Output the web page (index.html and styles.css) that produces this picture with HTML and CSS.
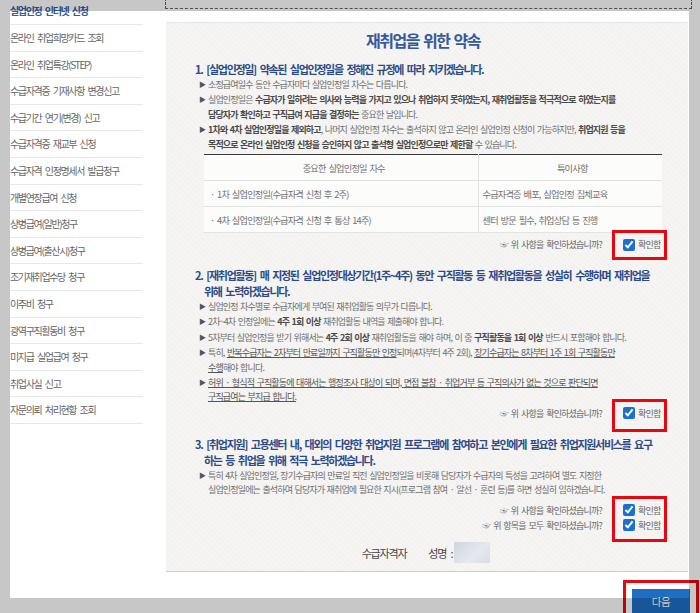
FILE: index.html
```html
<!DOCTYPE html>
<html>
<head>
	<meta charset="utf-8">
	<title>재취업을 위한 약속</title>

	<link rel="stylesheet" href="styles.css">
</head>
<body>

<div class="wrap">

	<div class="side">
		<ul>
			<li class="on"><a href="#">실업인정 인터넷 신청</a></li>
			<li><a href="#">온라인 취업희망카드 조회</a></li>
			<li><a href="#">온라인 취업특강(STEP)</a></li>
			<li><a href="#">수급자격증 기재사항 변경신고</a></li>
			<li><a href="#">수급기간 연기(변경) 신고</a></li>
			<li><a href="#">수급자격증 재교부 신청</a></li>
			<li><a href="#">수급자격 인정명세서 발급청구</a></li>
			<li><a href="#">개별연장급여 신청</a></li>
			<li><a href="#">상병급여(일반)청구</a></li>
			<li><a href="#">상병급여(출산시)청구</a></li>
			<li><a href="#">조기재취업수당 청구</a></li>
			<li><a href="#">이주비 청구</a></li>
			<li><a href="#">광역구직활동비 청구</a></li>
			<li><a href="#">미지급 실업급여 청구</a></li>
			<li><a href="#">취업사실 신고</a></li>
			<li><a href="#">자문의뢰 처리현황 조회</a></li>
		</ul>
	</div>

	<div class="main">
		<div class="topbox"></div>

		<div class="promise">
			<h2 class="title">재취업을 위한 약속</h2>

			<div class="item">
				<h3 class="head">1. [실업인정일] 약속된 실업인정일을 정해진 규정에 따라 지키겠습니다.</h3>
				<ul class="notes">
					<li>소정급여일수 동안 수급자마다 실업인정일 차수는 다릅니다.</li>
					<li>실업인정일은 <b>수급자가 일하려는 의사와 능력을 가지고 있으나 취업하지 못하였는지, 재취업활동을 적극적으로 하였는지를<br>담당자가 확인하고 구직급여 지급을 결정하는</b> 중요한 날입니다.</li>
					<li><b>1차와 4차 실업인정일을 제외하고</b>, 나머지 실업인정 차수는 출석하지 않고 온라인 실업인정 신청이 가능하지만, <b>취업지원 등을<br>목적으로 온라인 실업인정 신청을 승인하지 않고 출석형 실업인정으로만 제한할</b> 수 있습니다.</li>
				</ul>

				<table class="days">
					<tr>
						<th class="c1">중요한 실업인정일 차수</th>
						<th class="c2">특이사항</th>
					</tr>
					<tr>
						<td class="c1">· 1차 실업인정일(수급자격 신청 후 2주)</td>
						<td class="c2">수급자격증 배포, 실업인정 집체교육</td>
					</tr>
					<tr>
						<td class="c1">· 4차 실업인정일(수급자격 신청 후 통상 14주)</td>
						<td class="c2">센터 방문 필수, 취업상담 등 진행</td>
					</tr>
				</table>

				<div class="confirm c1st">
					<div class="q"><p>☞ 위 사항을 확인하셨습니까?</p></div>
					<div class="mark">
						<label><input type="checkbox" checked> 확인함</label>
					</div>
				</div>
			</div>

			<div class="item i2">
				<h3 class="head">2. [재취업활동] 매 지정된 실업인정대상기간(1주~4주) 동안 구직활동 등 재취업활동을 성실히 수행하며 재취업을<br>위해 노력하겠습니다.</h3>
				<ul class="notes">
					<li>실업인정 차수별로 수급자에게 부여된 재취업활동 의무가 다릅니다.</li>
					<li>2차~4차 인정일에는 <b>4주 1회 이상</b> 재취업활동 내역을 제출해야 합니다.</li>
					<li>5차부터 실업인정을 받기 위해서는 <b>4주 2회 이상</b> 재취업활동을 해야 하며, 이 중 <b>구직활동을 1회 이상</b> 반드시 포함해야 합니다.</li>
					<li>특히, <u>반복수급자는 2차부터 만료일까지 구직활동만 인정</u>되며(4차부터 4주 2회), <u>장기수급자는 8차부터 1주 1회 구직활동만<br>수행</u>해야 합니다.</li>
					<li><u>허위 · 형식적 구직활동에 대해서는 행정조사 대상이 되며, 면접 불참 · 취업거부 등 구직의사가 없는 것으로 판단되면<br>구직급여는 부지급 합니다.</u></li>
				</ul>

				<div class="confirm c2nd">
					<div class="q"><p>☞ 위 사항을 확인하셨습니까?</p></div>
					<div class="mark">
						<label><input type="checkbox" checked> 확인함</label>
					</div>
				</div>
			</div>

			<div class="item i3">
				<h3 class="head">3. [취업지원] 고용센터 내, 대외의 다양한 취업지원 프로그램에 참여하고 본인에게 필요한 취업지원서비스를 요구<br>하는 등 취업을 위해 적극 노력하겠습니다.</h3>
				<ul class="notes">
					<li>특히 4차 실업인정일, 장기수급자의 만료일 직전 실업인정일을 비롯해 담당자가 수급자의 특성을 고려하여 별도 지정한<br>실업인정일에는 출석하여 담당자가 재취업에 필요한 지시(프로그램 참여 · 알선 · 훈련 등)를 하면 성실히 임하겠습니다.</li>
				</ul>

				<div class="confirm c3rd">
					<div class="q">
						<p>☞ 위 사항을 확인하셨습니까?</p>
						<p>☞ 위 항목을 모두 확인하셨습니까?</p>
					</div>
					<div class="mark">
						<label><input type="checkbox" checked> 확인함</label>
						<label><input type="checkbox" checked> 확인함</label>
					</div>
				</div>
			</div>

			<div class="sign">
				<span>수급자격자</span>
				<span class="who">성명 : <i class="blur"></i></span>
			</div>
		</div>

		<div class="btns">
			<button class="next">다음</button>
		</div>
	</div>

</div>

<div class="frame"></div>

</body>
</html>
```

FILE: styles.css
```css
*{
	margin: 0;
	padding: 0;
	box-sizing: border-box;
}

body{
	width: 700px;
	height: 613px;
	overflow: hidden;
	background: #fff;
	color: #6a6a6a;
	font-family: "Noto Sans CJK KR", "Noto Sans", sans-serif;
}

ul{
	list-style: none;
}

/* gray frame over the edges */
.frame{
	position: fixed;
	top: 0;
	left: 0;
	right: 0;
	bottom: 0;
	border-style: solid;
	border-color: rgba(0,0,0,.22);
	border-width: 11px 11px 15px 10px;
	pointer-events: none;
}

.wrap{
	display: flex;
}

/* left menu */
.side{
	width: 165px;
	flex: none;
	padding-left: 10px;
}

.side ul{
	width: 133px;
	margin-top: -1.6px;
}

.side li{
	height: 26.6px;
	line-height: 25.6px;
	border-bottom: 1px solid #e8e8e8;
	font-size: 10px;
	letter-spacing: -1.35px;
	word-spacing: 2.5px;
	white-space: nowrap;
}

.side a{
	color: #666;
	text-decoration: none;
}

.side li.on a{
	color: #2f5aa8;
	font-weight: bold;
}

/* main */
.main{
	flex: 1;
}

.topbox{
	height: 11px;
	margin: -2px 8px 0 0;
	border: 1px dashed #666;
}

.promise{
	margin: 13px 12px 0 1px;
	padding: 5px 21px 7px 29px;
	border-top: 1px solid #e6e6e6;
	border-bottom: 1px solid #cdcdcd;
	background: #f6f5f3 repeating-linear-gradient(45deg, rgba(0,0,0,.012) 0 2px, transparent 2px 4px);
}

.title{
	padding-right: 16px;
	font-size: 16px;
	line-height: 24px;
	letter-spacing: -1.5px;
	word-spacing: 2px;
	text-align: center;
	color: #34599c;
	margin-bottom: 9px;
}

.head{
	padding-left: 9px;
	text-indent: -9px;
	font-size: 11px;
	line-height: 16px;
	letter-spacing: -1.3px;
	word-spacing: 2.5px;
	color: #2b4a88;
}

.notes{
	margin-left: 4px;
	font-size: 9px;
	line-height: 14.4px;
	letter-spacing: -0.85px;
	word-spacing: 1.2px;
	color: #6e6e6e;
}

.notes li{
	padding-left: 9px;
	text-indent: -9px;
}

.notes li::before{
	content: "▶";
	display: inline-block;
	width: 9px;
	text-indent: 0;
	font-size: 7px;
	letter-spacing: 0;
	color: #555;
	vertical-align: 1px;
}

.notes b{
	color: #4a4a4a;
}

.notes u{
	color: #555;
}

/* table */
.days{
	width: 458px;
	margin: 2px 0 0 9px;
	border-collapse: collapse;
	border-top: 1px solid #3a3a3a;
	background: #fcfcfb;
	font-size: 9.2px;
	letter-spacing: -0.8px;
	word-spacing: 1.5px;
	color: #707070;
}

.days th,
.days td{
	height: 26px;
	border-bottom: 1px solid #e2e2e2;
	font-weight: normal;
	text-align: left;
}

.days th{
	text-align: center;
}

.days .c1{
	width: 274px;
	padding-left: 6px;
}

.days .c2{
	padding-left: 4px;
	border-left: 1px solid #e2e2e2;
}

/* check rows */
.confirm{
	display: flex;
	justify-content: flex-end;
	align-items: flex-start;
	font-size: 9px;
	letter-spacing: -0.8px;
	word-spacing: 1.5px;
	color: #666;
}

.confirm .q{
	margin-right: 10px;
	padding-top: 7px;
	line-height: 15px;
	text-align: right;
}

.mark{
	width: 55px;
	padding: 4px 0 5px 8px;
	border: 3px solid #e8070f;
	line-height: 15px;
}

.mark label{
	display: flex;
	align-items: center;
	gap: 3px;
	height: 15px;
}

.mark input{
	width: 12px;
	height: 12px;
	margin: 0;
	accent-color: #1b6fd1;
}

.c1st{
	margin-top: -3px;
}

.i2{
	margin-top: 7px;
}

.c2nd{
	margin-top: -6px;
}

.c2nd .mark{
	padding-bottom: 8px;
}

.i3{
	margin-top: 4px;
}

.c3rd{
	margin-top: -2px;
}

.c3rd .mark{
	padding-bottom: 6px;
}

/* name */
.sign{
	display: flex;
	justify-content: center;
	align-items: center;
	gap: 22px;
	height: 22px;
	padding-right: 10px;
	font-size: 11px;
	letter-spacing: -1.2px;
	word-spacing: 3px;
	color: #444;
}

.who{
	display: flex;
	align-items: center;
	gap: 2px;
}

.blur{
	display: block;
	width: 36px;
	height: 21px;
	background: linear-gradient(135deg, #cfd4de, #e6e8ee 60%, #d9dce4);
}

/* button */
.btns{
	display: flex;
	justify-content: flex-end;
	padding: 17px 10px 0 0;
}

.next{
	width: 58px;
	height: 26px;
	border: 0;
	background: #1e6fc3;
	color: #fff;
	font-family: inherit;
	font-size: 10.5px;
	letter-spacing: -0.5px;
	outline: 3px solid #e8070f;
	outline-offset: 6px;
}
```
